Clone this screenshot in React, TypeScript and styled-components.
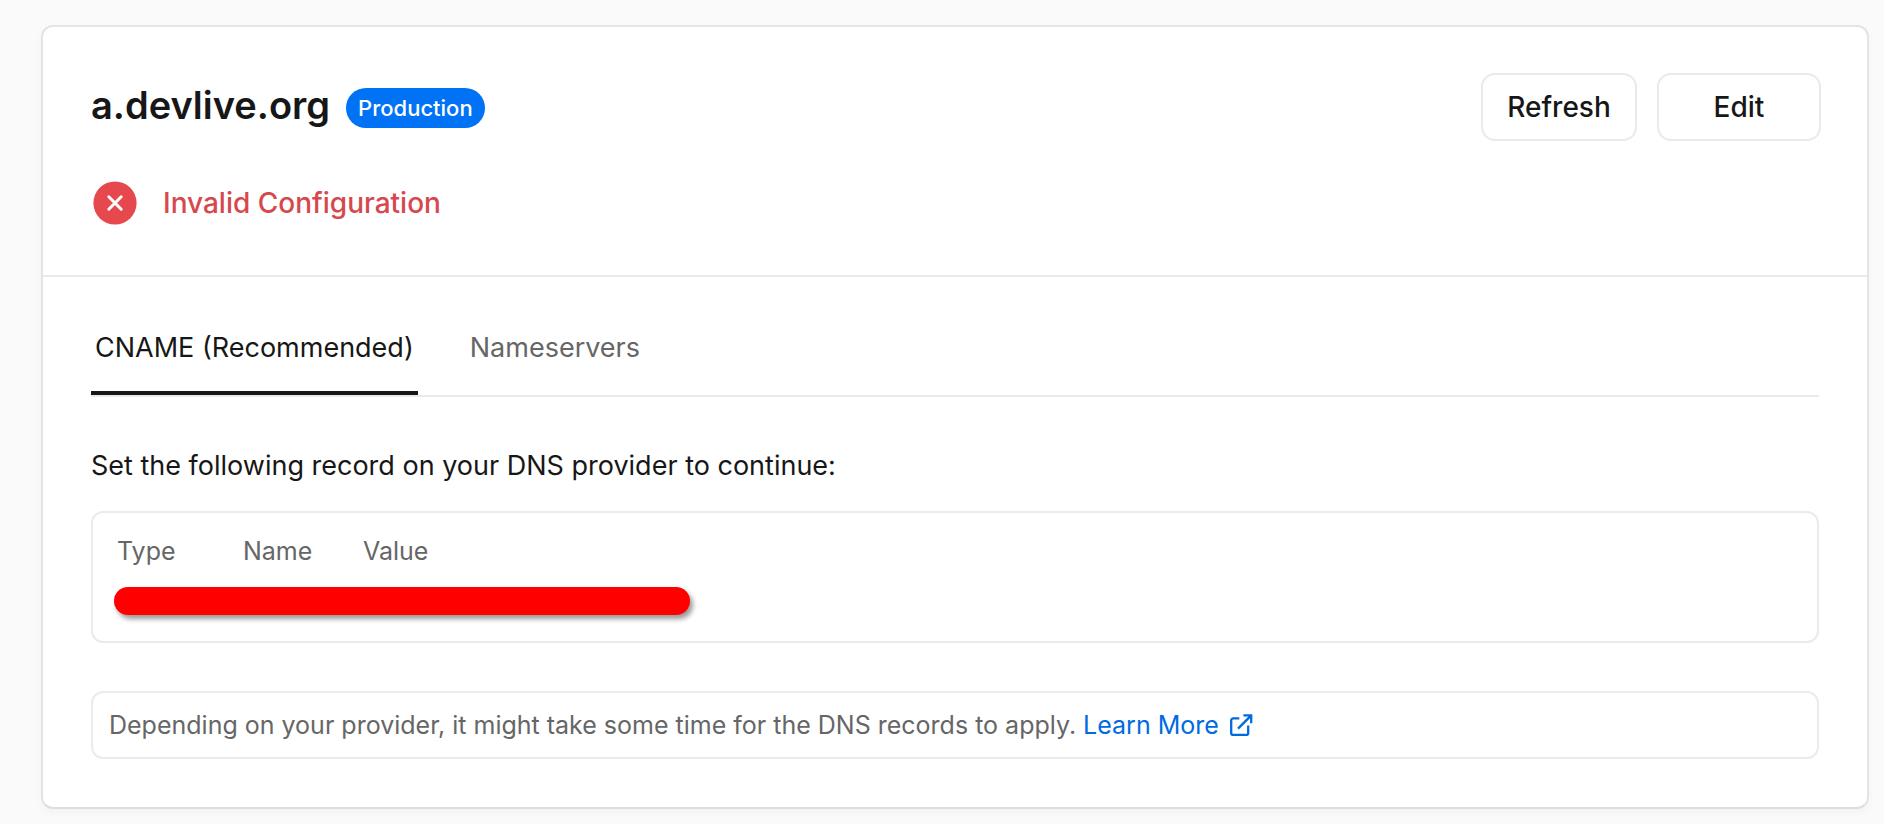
import React, { useState } from "react";
import styled, { createGlobalStyle } from "styled-components";

const GlobalStyle = createGlobalStyle`
  *, *::before, *::after { box-sizing: border-box; }
  body {
    margin: 0;
    background: #fafafa;
    color: #171717;
    font-family: Inter, "Liberation Sans", sans-serif;
    font-size: 27px;
    line-height: 40px;
  }
  button { font: inherit; color: inherit; cursor: pointer; }
`;

const Page = styled.main`
  padding: 25px 15px 15px 41px;
`;

const Card = styled.section`
  background: #fff;
  border: 2px solid #e4e4e4;
  border-bottom-color: #dedede;
  border-radius: 12px;
  box-shadow: 0 4px 8px rgba(0, 0, 0, 0.03);
`;

const Header = styled.header`
  display: flex;
  flex-direction: column;
  gap: 40px;
  padding: 46px 46px 50px 48px;
  border-bottom: 2px solid #eaeaea;
`;

const TitleRow = styled.div`
  display: flex;
  align-items: center;
  justify-content: space-between;
`;

const TitleGroup = styled.div`
  display: flex;
  align-items: center;
  gap: 16px;
  padding-top: 2px;
`;

const Title = styled.h1`
  margin: 0;
  padding-bottom: 6px;
  font-size: 38px;
  line-height: 48px;
  font-weight: 600;
`;

const Badge = styled.span`
  padding: 0 12px;
  border-radius: 20px;
  background: #0072f5;
  color: #fff;
  font-size: 22px;
  font-weight: 500;
`;

const Actions = styled.div`
  display: flex;
  gap: 20px;
`;

const ActionButton = styled.button<{ $width: number }>`
  width: ${(p) => p.$width}px;
  height: 68px;
  padding: 0;
  border: 2px solid #eaeaea;
  border-radius: 14px;
  background: #fff;
  font-size: 28px;
  font-weight: 500;
`;

const Status = styled.div`
  display: flex;
  align-items: center;
  gap: 26px;
  padding-left: 2px;
  color: #d6484d;
  font-size: 28px;
  font-weight: 500;
`;

const Body = styled.div`
  padding: 48px;
`;

const TabList = styled.div`
  display: flex;
  gap: 48px;
  border-bottom: 2px solid #eaeaea;
`;

const Tab = styled.button<{ $active: boolean }>`
  height: 70px;
  padding: 3px 4px 23px;
  border: 0;
  border-bottom: 4px solid ${(p) => (p.$active ? "#171717" : "transparent")};
  background: none;
  color: ${(p) => (p.$active ? "#171717" : "#666")};
`;

const Instruction = styled.p`
  margin: 49px 0 25px;
`;

const Panel = styled.div`
  border: 2px solid #ebebeb;
  border-radius: 12px;
`;

const RecordPanel = styled(Panel)`
  padding: 18px 21px 26px;
`;

const RecordTable = styled.table`
  border-collapse: collapse;
  color: #666;
  font-size: 25px;
`;

const HeadCell = styled.th<{ $width: number }>`
  width: ${(p) => p.$width}px;
  padding: 0 0 0 3px;
  text-align: left;
  font-weight: 400;
`;

const RecordCell = styled.td`
  padding: 16px 0 0;
`;

const Redaction = styled.div`
  height: 28px;
  border-radius: 14px;
  background: #f00;
  box-shadow: 3px 4px 5px rgba(0, 0, 0, 0.4);
`;

const Note = styled(Panel)`
  margin-top: 48px;
  padding: 12px 16px;
  color: #666;
  font-size: 25px;
`;

const NoteLink = styled.a`
  display: inline-flex;
  align-items: center;
  gap: 11px;
  color: #006ae0;
  text-decoration: none;
`;

function ErrorIcon() {
  return (
    <svg width="44" height="44" viewBox="0 0 44 44" fill="none" aria-hidden="true">
      <circle cx="22" cy="22" r="21.6" fill="#e5484d" />
      <path d="M15.8 15.8l12.4 12.4M28.2 15.8l-12.4 12.4" stroke="#fff" strokeWidth="3" strokeLinecap="round" />
    </svg>
  );
}

function ExternalIcon() {
  return (
    <svg width="23" height="23" viewBox="0 0 23 23" fill="none" stroke="currentColor" strokeWidth="2.3" aria-hidden="true">
      <path d="M9.3 4.4H3.2a2 2 0 0 0-2 2v12.5a2 2 0 0 0 2 2h13a2 2 0 0 0 2-2v-7.4" />
      <path d="M13.4 1.4h7.8v7.9M21 1.6L8 14.6" />
    </svg>
  );
}

const tabs = ["CNAME (Recommended)", "Nameservers"];

export default function App() {
  const [active, setActive] = useState(0);

  return (
    <>
      <GlobalStyle />
      <Page>
        <Card>
          <Header>
            <TitleRow>
              <TitleGroup>
                <Title>a.devlive.org</Title>
                <Badge>Production</Badge>
              </TitleGroup>
              <Actions>
                <ActionButton type="button" $width={156}>Refresh</ActionButton>
                <ActionButton type="button" $width={164}>Edit</ActionButton>
              </Actions>
            </TitleRow>
            <Status role="status">
              <ErrorIcon />
              Invalid Configuration
            </Status>
          </Header>
          <Body>
            <TabList role="tablist">
              {tabs.map((label, i) => (
                <Tab
                  key={label}
                  type="button"
                  role="tab"
                  aria-selected={i === active}
                  $active={i === active}
                  onClick={() => setActive(i)}
                >
                  {label}
                </Tab>
              ))}
            </TabList>
            <Instruction>Set the following record on your DNS provider to continue:</Instruction>
            <RecordPanel>
              <RecordTable>
                <thead>
                  <tr>
                    <HeadCell scope="col" $width={126}>Type</HeadCell>
                    <HeadCell scope="col" $width={120}>Name</HeadCell>
                    <HeadCell scope="col" $width={330}>Value</HeadCell>
                  </tr>
                </thead>
                <tbody>
                  <tr>
                    <RecordCell colSpan={3}>
                      <Redaction />
                    </RecordCell>
                  </tr>
                </tbody>
              </RecordTable>
            </RecordPanel>
            <Note>
              Depending on your provider, it might take some time for the DNS records to apply.{" "}
              <NoteLink href="#learn-more">
                Learn More
                <ExternalIcon />
              </NoteLink>
            </Note>
          </Body>
        </Card>
      </Page>
    </>
  );
}
